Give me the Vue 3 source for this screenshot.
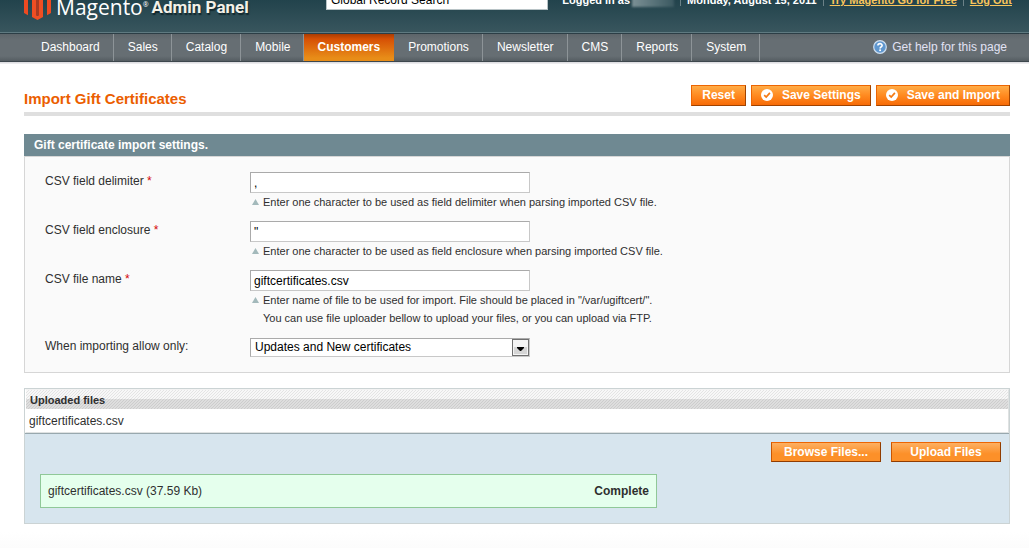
<script setup>
import { ref } from 'vue'

const tabs = ['Dashboard', 'Sales', 'Catalog', 'Mobile', 'Customers', 'Promotions', 'Newsletter', 'CMS', 'Reports', 'System']
const active = 'Customers'

const fields = [
  { id: 'delimiter', label: 'CSV field delimiter', value: ref(','), notes: ['Enter one character to be used as field delimiter when parsing imported CSV file.'] },
  { id: 'enclosure', label: 'CSV field enclosure', value: ref('"'), notes: ['Enter one character to be used as field enclosure when parsing imported CSV file.'] },
  {
    id: 'filename',
    label: 'CSV file name',
    value: ref('giftcertificates.csv'),
    notes: [
      'Enter name of file to be used for import. File should be placed in "/var/ugiftcert/".',
      'You can use file uploader bellow to upload your files, or you can upload via FTP.',
    ],
  },
]
const search = ref('Global Record Search')
const allow = ref('both')
</script>

<template>
  <div class="page">
    <header class="header">
      <div class="brand">
        <svg class="mark" width="27" height="31" viewBox="0 0 27 31" aria-hidden="true">
          <path d="M13.500 0 27 8v16l-4 2.200V10L13.500 4.500 4 10v16.200L0 24V8z" fill="#ee4a21" />
          <path d="M8 11l4-2v17l1.500 1 1.500-1V9l4 2v17l-5.500 3L8 28z" fill="#f04e23" />
          <path d="M12 9h3v17l-1.500 1-1.500-1z" fill="#a93a22" />
        </svg>
        <span class="name">Magento<sup>®</sup></span>
        <span class="panel-name">Admin Panel</span>
      </div>
      <input v-model="search" class="search" type="text" aria-label="Global Record Search" />
      <div class="session">
        <span>Logged in as</span>
        <span class="user"></span>
        <i></i>
        <span>Monday, August 15, 2011</span>
        <i></i>
        <a href="#">Try Magento Go for Free</a>
        <i></i>
        <a href="#">Log Out</a>
      </div>
    </header>

    <nav class="nav">
      <ul>
        <li v-for="t in tabs" :key="t" :class="{ active: t === active }">
          <a href="#">{{ t }}</a>
        </li>
      </ul>
      <a class="help" href="#">
        <svg width="14" height="14" viewBox="0 0 14 14" aria-hidden="true">
          <circle cx="7" cy="7" r="6.300" fill="#5f97cf" stroke="#cfe0f1" stroke-width="1.200" />
          <path d="M4.900 5.500C4.900 2.900 9.200 3 9.100 5.400 9.100 6.800 7.100 6.800 7.100 8.500" fill="none" stroke="#fff" stroke-width="1.600" />
          <rect x="6.200" y="9.400" width="1.800" height="1.700" fill="#fff" />
        </svg>
        <span>Get help for this page</span>
      </a>
    </nav>

    <main class="main">
      <div class="title-row">
        <h1>Import Gift Certificates</h1>
        <div class="actions">
          <button type="button" class="btn">Reset</button>
          <button v-for="b in ['Save Settings', 'Save and Import']" :key="b" type="button" class="btn with-icon">
            <svg width="12" height="12" viewBox="0 0 12 12" aria-hidden="true">
              <circle cx="6" cy="6" r="6" fill="#fff" />
              <path d="M3.200 6.200 5.200 8.100 8.900 3.900" fill="none" stroke="#f57a14" stroke-width="1.700" />
            </svg>
            <span>{{ b }}</span>
          </button>
        </div>
      </div>

      <section class="settings">
        <h2>Gift certificate import settings.</h2>
        <form class="form" @submit.prevent>
          <div v-for="f in fields" :key="f.id" class="row">
            <label :for="f.id">{{ f.label }} <em>*</em></label>
            <div class="control">
              <input :id="f.id" v-model="f.value.value" type="text" />
              <p class="note">
                <svg width="7" height="6" viewBox="0 0 7 6" aria-hidden="true"><path d="M3.500 0 7 6H0z" fill="#a3b9bb" /></svg>
                <span v-for="n in f.notes" :key="n">{{ n }}</span>
              </p>
            </div>
          </div>
          <div class="row">
            <label for="allow">When importing allow only:</label>
            <div class="select">
              <select id="allow" v-model="allow">
                <option value="both">Updates and New certificates</option>
              </select>
              <svg width="17" height="17" viewBox="0 0 17 17" aria-hidden="true">
                <rect x=".5" y=".5" width="16" height="16" fill="#f4f4f4" stroke="#707070" />
                <rect x="2" y="8" width="13" height="7" fill="#d5d5d5" />
                <path d="M5 8h7v1L9 12H8L5 9z" fill="#000" />
              </svg>
            </div>
          </div>
        </form>
      </section>

      <section class="uploads">
        <table>
          <thead><tr><th>Uploaded files</th></tr></thead>
          <tbody><tr><td>giftcertificates.csv</td></tr></tbody>
        </table>
        <div class="uploader">
          <div class="upload-actions">
            <button type="button" class="btn flat">Browse Files...</button>
            <button type="button" class="btn flat">Upload Files</button>
          </div>
          <div class="progress">
            <span>giftcertificates.csv (37.59 Kb)</span>
            <strong>Complete</strong>
          </div>
        </div>
      </section>
    </main>
  </div>
</template>

<style>
body { margin: 0; background: #fff; }
</style>

<style scoped>
.page {
  background: linear-gradient(#fff, #fcfcfc) bottom / 100% 16px no-repeat;
  color: #2f2f2f;
  font: 12px/18px "Liberation Sans", Arial, sans-serif;
}
.page * { box-sizing: border-box; }
a { color: inherit; text-decoration: none; }

.header {
  display: flex;
  align-items: flex-end;
  height: 34px;
  padding: 0 17px 0 24px;
  overflow: hidden;
  background: linear-gradient(#22434c, #39565e);
  border-bottom: 1px solid #2c3e46;
  box-shadow: inset 0 -1px #5f7a81;
  color: #fff;
}
.brand { display: flex; align-items: flex-end; width: 302px; flex: none; padding-bottom: 13px; }
.mark { flex: none; }
.name { margin: 0 0 1px 5px; font: 21px/24px "Open Sans", sans-serif; }
.name sup { font-size: 7px; line-height: 7px; vertical-align: 8px; }
.panel-name {
  margin: 0 0 1px 3px;
  color: #f3f1e8;
  font: bold 17px/24px Roboto, sans-serif;
  text-shadow: 1px 2px 1px #12282e;
  white-space: nowrap;
}
.search {
  width: 222px;
  height: 20px;
  flex: none;
  margin-bottom: 23px;
  padding: 0 4px;
  border: 1px solid #b8c3c6;
  background: #fff;
  color: #000;
  font: 12px/18px "Liberation Sans", Arial, sans-serif;
}
.session {
  display: flex;
  align-items: center;
  margin-left: auto;
  padding-bottom: 24px;
  font: bold 11px/18px "Liberation Sans", Arial, sans-serif;
  white-space: nowrap;
}
.session .user { width: 42px; height: 14px; margin-left: 2px; background: linear-gradient(90deg, #7b9095, #3a5860); filter: blur(1px); }
.session i { width: 1px; height: 11px; margin: 0 6px; background: #6b8187; }
.session a { color: #f8c55c; text-decoration: underline; }

.nav {
  display: flex;
  justify-content: space-between;
  align-items: center;
  height: 30px;
  padding: 0 22px 0 28px;
  background: linear-gradient(#5d656a, #666e73 6px, #666e73 22px, #555d62 27px, #3d474d 27px, #3d474d 28px, #d8d8dc 28px, #f2f2f4);
}
.nav ul { display: flex; align-self: flex-start; margin: 0; padding: 0; list-style: none; }
.nav li { height: 27px; padding: 0 13px 0 14px; border-right: 1px solid #8d9498; color: #fff; line-height: 27px; }
.nav li:first-child { padding-left: 13px; }
.nav li.active { padding: 0 14px 0 13px; border: 0; background: linear-gradient(#a93c03, #d65005 5px, #e88d18 24px); font-weight: bold; }
.help { display: flex; align-items: center; gap: 5px; padding-bottom: 4px; color: #e1e2f4; }

.main { padding: 20px 19px 24px 24px; }
.title-row { display: flex; justify-content: space-between; align-items: flex-start; height: 32px; border-bottom: 4px solid #dfdfdf; }
h1 { margin: 6px 0 0; font-size: 15px; line-height: 18px; color: #eb5e00; }
.actions { display: flex; gap: 5px; margin-top: 1px; }
.btn {
  display: flex;
  align-items: center;
  justify-content: center;
  gap: 9px;
  height: 21px;
  padding: 0 10px 1px;
  border: 1px solid;
  border-color: #ed6502 #a04300 #a04300 #ed6502;
  background: linear-gradient(#ffac47, #ff8a20 50%, #f76b07);
  color: #fff;
  font: bold 12px/18px "Liberation Sans", Arial, sans-serif;
}
.btn.with-icon { padding: 0 9px 1px; }
.btn.flat { width: 110px; height: 20px; padding: 0; background: linear-gradient(#fdb062, #fc9029 60%); border-color: #ed6502 #903c00 #903c00 #c95602; }

.settings { margin-top: 18px; }
h2 { margin: 0; padding: 2px 10px; background: #6f8992; color: #fff; font-size: 12px; line-height: 18px; }
.form { padding: 15px 20px 15px; border: 1px solid #d6d6d6; background: #fafafa; }
.row { display: flex; min-height: 49px; }
.row:last-child { min-height: 20px; }
.row label { width: 205px; flex: none; }
.row em { color: #d40707; font-style: normal; }
.control input {
  display: block;
  width: 280px;
  height: 21px;
  padding: 2px 3px;
  border: 1px solid;
  border-color: #aaa #c8c8c8 #c8c8c8 #aaa;
  background: #fff;
  color: #000;
  font: 12px/18px "Liberation Sans", Arial, sans-serif;
}
.note { position: relative; display: grid; margin: 0 0 10px; padding-left: 13px; font-size: 11px; line-height: 18px; }
.note svg { position: absolute; left: 2px; top: 6px; }
.select { position: relative; width: 280px; margin-top: 1px; }
.select select {
  display: block;
  width: 100%;
  height: 19px;
  padding: 0 4px 1px;
  appearance: none;
  border: 1px solid;
  border-color: #aaa #c8c8c8 #c8c8c8 #aaa;
  border-radius: 0;
  background: #fff;
  color: #000;
  font: 12px/16px "Liberation Sans", Arial, sans-serif;
}
.select svg { position: absolute; right: 1px; top: 1px; pointer-events: none; }

.uploads { margin-top: 15px; border: 1px solid #cbd3d4; }
table { width: 100%; border: 1px solid #dfe2e2; border-top-color: #f2f2f2; border-left-color: #fff; border-spacing: 0; background: #fff; }
th {
  height: 19px;
  padding: 0 4px;
  background:
    linear-gradient(135deg, transparent 40%, rgba(0, 0, 0, .08) 40% 60%, transparent 60%) 0 0 / 3px 3px,
    linear-gradient(#f7f7f7 9px, #dedede 9px);
  font-size: 11px;
  line-height: 18px;
  text-align: left;
}
td { height: 23px; padding: 0 3px; line-height: 18px; }
.uploader { padding: 8px; border-top: 1px solid #98a8ae; background: #d7e5ee; }
.upload-actions { display: flex; justify-content: flex-end; gap: 10px; }
.progress {
  display: flex;
  justify-content: space-between;
  max-width: 617px;
  margin: 12px 0 7px 7px;
  padding: 7px;
  border: 1px solid #90c898;
  background: #e5ffed;
}
</style>
